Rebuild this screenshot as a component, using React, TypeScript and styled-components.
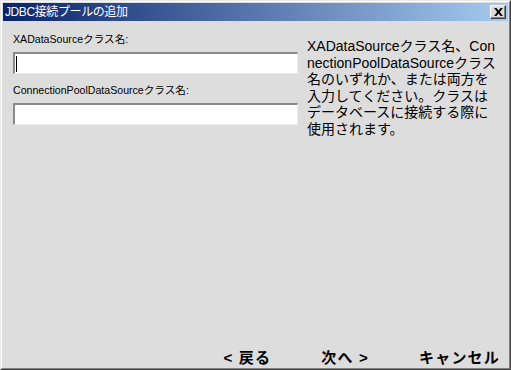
import React from "react";
import styled, { createGlobalStyle } from "styled-components";

const Global = createGlobalStyle`
	html, body {
		margin: 0;
		padding: 0;
		background: #dddddd;
	}
	body {
		font-family: "Liberation Sans", "Noto Sans CJK JP", sans-serif;
	}
`;

export default function App() {
	return (
		<>
			<Global />
			<Window>
				<Frame>
					<TitleBar>
						<Title>JDBC接続プールの追加</Title>
						<CloseButton aria-label='閉じる'>
							<svg width='9' height='8' viewBox='0 0 9 8'>
								<path d='M0 0h2.4L4.5 2.5 6.6 0H9L5.8 4 9 8H6.6L4.5 5.5 2.4 8H0l3.2-4z' fill='#000' />
							</svg>
						</CloseButton>
					</TitleBar>
					<Body>
						<Fields>
							<Label>XADataSourceクラス名:</Label>
							<Input focused />
							<Label>ConnectionPoolDataSourceクラス名:</Label>
							<Input />
						</Fields>
						<Help>
							XADataSourceクラス名、Con
							<br />
							nectionPoolDataSourceクラス
							<br />
							名のいずれか、または両方を
							<br />
							入力してください。クラスは
							<br />
							データベースに接続する際に
							<br />
							使用されます。
						</Help>
					</Body>
					<Footer>
						<NavButton>&lt; 戻る</NavButton>
						<NavButton>次へ &gt;</NavButton>
						<NavButton>キャンセル</NavButton>
					</Footer>
				</Frame>
			</Window>
		</>
	);
}

const Window = styled.div`
	width: 511px;
	height: 370px;
	box-sizing: border-box;
	border: 1px solid;
	border-color: #e8e8e8 #404040 #404040 #e8e8e8;
	background: #dddddd;
`;
const Frame = styled.div`
	height: 100%;
	box-sizing: border-box;
	border: 1px solid;
	border-color: #ffffff #808080 #808080 #ffffff;
	padding: 1px;
	display: flex;
	flex-direction: column;
`;
const TitleBar = styled.div`
	height: 18px;
	flex: none;
	display: flex;
	align-items: center;
	justify-content: space-between;
	padding: 0 2px 0 2px;
	background: linear-gradient(to right, #0a246a, #a6caf0);
`;
const Title = styled.span`
	color: #ffffff;
	font-size: 12px;
	letter-spacing: -0.4px;
	line-height: 18px;
	white-space: nowrap;
`;
const CloseButton = styled.div`
	width: 16px;
	height: 14px;
	box-sizing: border-box;
	display: flex;
	align-items: center;
	justify-content: center;
	background: #dddddd;
	border: 1px solid;
	border-color: #ffffff #404040 #404040 #ffffff;
	box-shadow: inset -1px -1px #808080;
`;
const Body = styled.div`
	flex: 1;
	display: flex;
	padding: 12px 0 0 10px;
	gap: 9px;
`;
const Fields = styled.div`
	width: 285px;
	display: flex;
	flex-direction: column;
`;
const Label = styled.div`
	font-size: 10.6px;
	line-height: 13px;
	color: #000000;
	margin-bottom: 6px;
	white-space: nowrap;
	&:not(:first-child) {
		margin-top: 10px;
	}
`;
const Input = styled.div<{ focused?: boolean }>`
	height: 22px;
	box-sizing: border-box;
	background: #ffffff;
	border-top: 2px solid #8a8a8a;
	border-left: 2px solid #8a8a8a;
	border-right: 1px solid #ececec;
	border-bottom: 1px solid #ececec;
	position: relative;
	&::before {
		content: "";
		display: ${(p) => (p.focused ? "block" : "none")};
		position: absolute;
		left: 1px;
		top: 2px;
		width: 1px;
		height: 16px;
		background: #000000;
	}
`;
const Help = styled.div`
	padding-top: 5px;
	font-size: 14px;
	line-height: 16.6px;
	color: #000000;
	white-space: nowrap;
`;
const Footer = styled.div`
	flex: none;
	height: 20px;
	display: flex;
	justify-content: flex-end;
	align-items: center;
	gap: 50px;
	padding-right: 8px;
	margin-bottom: 1px;
`;
const NavButton = styled.div`
	font-size: 15px;
	font-weight: bold;
	letter-spacing: 1.2px;
	color: #000000;
	white-space: nowrap;
`;
